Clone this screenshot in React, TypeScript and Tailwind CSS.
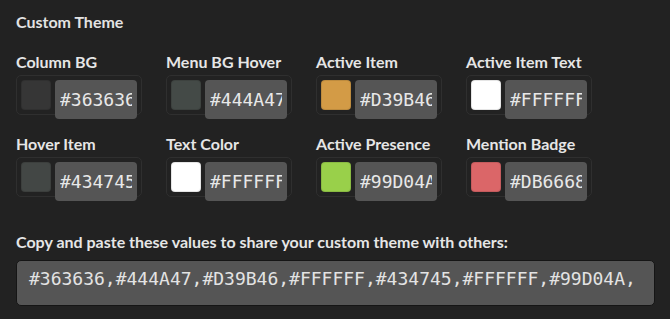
const colors = [
  { label: "Column BG", value: "#363636" },
  { label: "Menu BG Hover", value: "#444A47" },
  { label: "Active Item", value: "#D39B46" },
  { label: "Active Item Text", value: "#FFFFFF" },
  { label: "Hover Item", value: "#434745" },
  { label: "Text Color", value: "#FFFFFF" },
  { label: "Active Presence", value: "#99D04A" },
  { label: "Mention Badge", value: "#DB6668" },
]

function ColorField({ label, value }: { label: string; value: string }) {
  return (
    <div>
      <div className="text-[16px] leading-[20px] font-bold text-[#e6e6e6] mb-[3px]">{label}</div>
      <div className="w-[126px] h-[40px] border border-[#2f2f2f] rounded-[5px] p-[4px] flex gap-[4px] items-start">
        <div
          className="w-[30px] h-[30px] shrink-0 rounded-[4px] border border-black/10"
          style={{ backgroundColor: value }}
        />
        <input
          readOnly
          value={value}
          className="w-[82px] h-[39px] shrink-0 rounded-[4px] bg-[#555555] px-[5px] text-[18px] text-[#e8e8e8] outline-none"
          style={{ fontFamily: '"DejaVu Sans Mono", monospace' }}
        />
      </div>
    </div>
  )
}

export default function App() {
  // the box only shows the first line of the share string
  const shown = colors.slice(0, 7).map((c) => c.value + ",").join("")
  return (
    <div
      className="w-[670px] h-[319px] bg-[#222222] px-4 pt-[12px] overflow-hidden"
      style={{ fontFamily: "Lato, sans-serif" }}
    >
      <h3 className="text-[16px] leading-[20px] font-bold text-[#e3e3e3] mb-[20px]">Custom Theme</h3>

      <div className="grid grid-cols-[repeat(4,150px)] gap-y-[19px]">
        {colors.map((c) => (
          <ColorField key={c.label} label={c.label} value={c.value} />
        ))}
      </div>

      {/* Share string */}
      <div className="mt-[35px] text-[16px] leading-[20px] font-bold text-[#e6e6e6]">
        Copy and paste these values to share your custom theme with others:
      </div>
      <div
        className="mt-[8px] w-[639px] h-[46px] bg-[#555555] border border-[#151515] rounded-[5px] px-[12px] pt-[4px] whitespace-nowrap text-[18px] leading-[27px] text-[#e3e3e3]"
        style={{ fontFamily: '"DejaVu Sans Mono", monospace' }}
      >
        {shown}
      </div>
    </div>
  )
}
